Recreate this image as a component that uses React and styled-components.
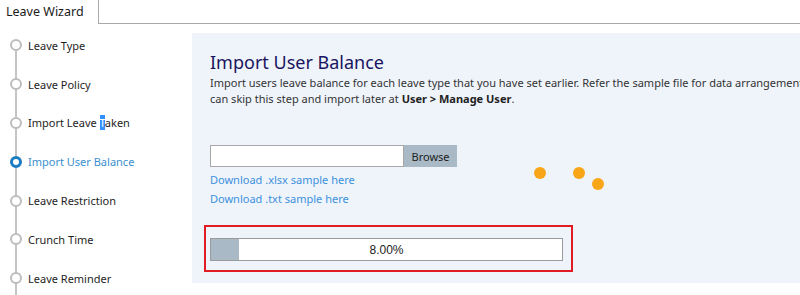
import styled, { createGlobalStyle } from "styled-components";

const GlobalStyle = createGlobalStyle`
  html, body {
    margin: 0;
    padding: 0;
    background: #ffffff;
    overflow: hidden;
  }
  body {
    font-family: "Noto Sans", "DejaVu Sans", sans-serif;
    color: #222;
  }
`;

const steps = [
  "Leave Type",
  "Leave Policy",
  "Import Leave Taken",
  "Import User Balance",
  "Leave Restriction",
  "Crunch Time",
  "Leave Reminder",
];

const Page = styled.div`
  width: 800px;
  height: 295px;
  overflow: hidden;
`;

const TabBar = styled.div`
  display: flex;
  height: 24px;
`;

const Tab = styled.div`
  width: 92px;
  padding-left: 6px;
  border-right: 1px solid #aaa;
  font-size: 12.5px;
  line-height: 24px;
  color: #1b1b1b;
`;

const TabRest = styled.div`
  flex: 1;
  border-bottom: 1px solid #aaa;
`;

const Body = styled.div`
  display: flex;
`;

const Sidebar = styled.ul`
  position: relative;
  width: 192px;
  margin: 0;
  padding: 2px 0 0 0;
  list-style: none;

  &::before {
    content: "";
    position: absolute;
    left: 15px;
    top: 20px;
    bottom: -40px;
    width: 2px;
    background: #c4c4c4;
  }
`;

const Step = styled.li`
  position: relative;
  display: flex;
  align-items: center;
  gap: 6px;
  height: 38.8px;
  padding-left: 10px;
  font-size: 11px;
  color: ${(p) => (p.$active ? "#3a8fcf" : "#1e1e1e")};
`;

const Dot = styled.span`
  box-sizing: border-box;
  width: 12px;
  height: 12px;
  border-radius: 50%;
  background: #fff;
  border: ${(p) => (p.$active ? "3px solid #1c7cc2" : "2px solid #bdbdbd")};
  flex-shrink: 0;
`;

const Selected = styled.span`
  background: #3390ff;
  color: #fff;
`;

const Panel = styled.div`
  position: relative;
  flex: 1;
  margin-top: 9px;
  height: 250px;
  background: #eff4fb;
  padding: 16px 0 0 18px;
  box-sizing: border-box;
  overflow: hidden;
`;

const Title = styled.h2`
  margin: 0;
  font-size: 18px;
  font-weight: 400;
  line-height: 26px;
  color: #1a1560;
`;

const Desc = styled.p`
  margin: 0;
  font-size: 11px;
  line-height: 16px;
  color: #333;
  white-space: nowrap;

  b {
    font-weight: 700;
    color: #222;
  }
`;

const FileRow = styled.div`
  display: flex;
  margin-top: 38px;
  height: 22px;
`;

const FileBox = styled.div`
  box-sizing: border-box;
  width: 194px;
  height: 22px;
  background: #fff;
  border: 1px solid #a8a8a8;
`;

const Browse = styled.button`
  width: 53px;
  height: 22px;
  border: none;
  background: #a9bac6;
  font-family: inherit;
  font-size: 11px;
  color: #222;
  padding: 0;
`;

const Link = styled.a`
  display: block;
  font-size: 11px;
  line-height: 19px;
  color: #3d91dc;
  text-decoration: none;
  margin-top: ${(p) => p.$top || 0}px;
`;

const Highlight = styled.div`
  box-sizing: border-box;
  width: 369px;
  height: 47px;
  margin: 17px 0 0 -6px;
  border: 2px solid #e01b24;
  padding: 11px 8px 0 4px;
`;

const Bar = styled.div`
  position: relative;
  box-sizing: border-box;
  height: 23px;
  border: 1px solid #9a9a9a;
  background: #fff;
  display: flex;
  align-items: center;
  justify-content: center;
  font-family: "Liberation Sans", Arial, sans-serif;
  font-size: 12px;
  color: #222;
`;

const Fill = styled.div`
  position: absolute;
  left: 0;
  top: 0;
  bottom: 0;
  background: #a9bac6;
`;

const Label = styled.span`
  position: relative;
`;

const Spinner = styled.span`
  position: absolute;
  width: 12px;
  height: 12px;
  border-radius: 50%;
  background: #f8a517;
`;

export default function App() {
  const progress = 8;
  return (
    <Page>
      <GlobalStyle />
      <TabBar>
        <Tab>Leave Wizard</Tab>
        <TabRest />
      </TabBar>
      <Body>
        <Sidebar>
          {steps.map((s, i) => (
            <Step key={s} $active={i === 3}>
              <Dot $active={i === 3} />
              {i === 2 ? (
                <span>
                  Import Leave <Selected>T</Selected>aken
                </span>
              ) : (
                s
              )}
            </Step>
          ))}
        </Sidebar>
        <Panel>
          <Title>Import User Balance</Title>
          <Desc>
            Import users leave balance for each leave type that you have set earlier. Refer the sample file for data arrangement. You
            <br />
            can skip this step and import later at <b>User &gt; Manage User</b>.
          </Desc>
          <FileRow>
            <FileBox />
            <Browse>Browse</Browse>
          </FileRow>
          <Link href="#" $top={3}>Download .xlsx sample here</Link>
          <Link href="#">Download .txt sample here</Link>
          <Highlight>
            <Bar>
              <Fill style={{ width: `${progress}%` }} />
              <Label>{progress.toFixed(2)}%</Label>
            </Bar>
          </Highlight>
          <Spinner style={{ left: 342, top: 134 }} />
          <Spinner style={{ left: 381, top: 134 }} />
          <Spinner style={{ left: 400, top: 145 }} />
        </Panel>
      </Body>
    </Page>
  );
}
